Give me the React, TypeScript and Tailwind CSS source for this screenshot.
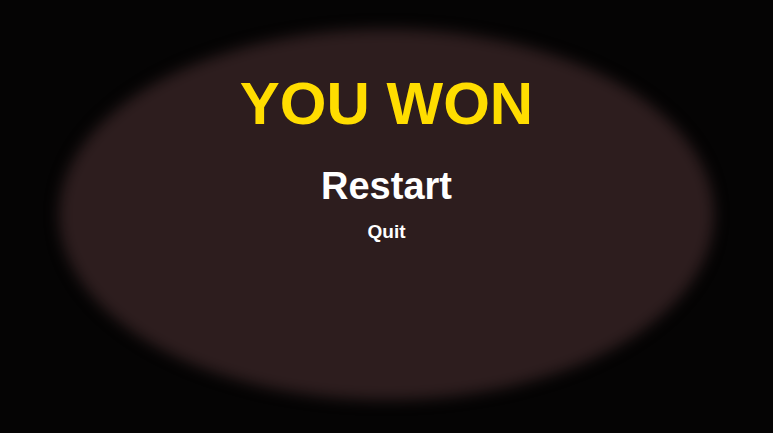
import React from "react";

export default function App() {
  return (
    <div
      className="relative w-[773px] h-[433px] overflow-hidden bg-[#050404]"
      style={{ fontFamily: '"Liberation Sans", Arial, sans-serif' }}
    >
      <div className="absolute left-[59px] top-[29px] w-[655px] h-[371px] rounded-[50%] bg-[#2d1d1e] blur-[7px]" />
      <div className="relative flex flex-col items-center pt-[74px]">
        <div className="text-[60px] leading-none font-bold text-[#ffdd00]">YOU WON</div>
        <div className="mt-[33px] text-[38px] leading-none font-bold text-white">Restart</div>
        <div className="mt-[17px] text-[19px] leading-none font-bold text-white">Quit</div>
      </div>
    </div>
  );
}
